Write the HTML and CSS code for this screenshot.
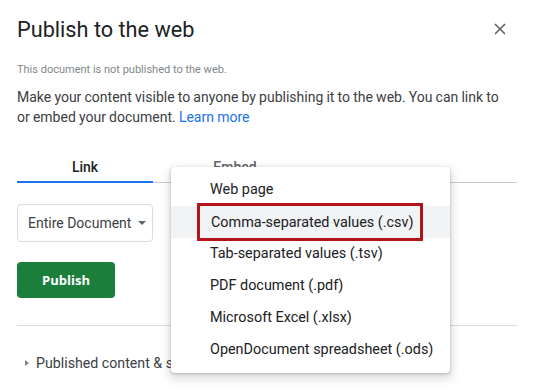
FILE: index.html
```html
<!DOCTYPE html>
<html>
<head>
<meta charset="utf-8">
<link rel="stylesheet" href="styles.css">
</head>
<body>
<div class="dialog">
  <div class="header">
    <h1 class="title">Publish to the web</h1>
    <svg class="close" width="12" height="12" viewBox="0 0 12 12"><path d="M1 1L11 11M11 1L1 11" stroke="#5f6368" stroke-width="1.6"/></svg>
  </div>
  <div class="status">This document is not published to the web.</div>
  <p class="desc">Make your content visible to anyone by publishing it to the web. You can link to or embed your document. <a class="link">Learn more</a></p>
  <div class="tabs">
    <div class="tab active">Link</div>
    <div class="tab embed">Embed</div>
  </div>
  <div class="select">Entire Document <span class="caret"></span></div>
  <button class="publish">Publish</button>
  <hr class="divider">
  <div class="settings"><span class="tri"></span>Published content &amp; settings</div>
</div>
<ul class="menu">
  <li class="item">Web page</li>
  <li class="item hl"><span class="box">Comma-separated values (.csv)</span></li>
  <li class="item">Tab-separated values (.tsv)</li>
  <li class="item">PDF document (.pdf)</li>
  <li class="item">Microsoft Excel (.xlsx)</li>
  <li class="item">OpenDocument spreadsheet (.ods)</li>
</ul>
</body>
</html>
```
FILE: styles.css
```css
html, body { margin: 0; padding: 0; background: #fff; }
body { font-family: Roboto, "Noto Sans", sans-serif; color: #3c4043; width: 535px; height: 389px; overflow: hidden; position: relative; }
.dialog { padding: 0 18px 0 17px; }
.header { display: flex; justify-content: space-between; align-items: center; height: 57px; }
.title { margin: 0; font-family: Roboto, sans-serif; font-weight: 400; font-size: 21.7px; color: #202124; padding-top: 1px; }
.close { margin-right: 11px; margin-top: 0; }
.status { font-size: 11px; color: #80868b; line-height: 14px; margin-top: 6px; }
.desc { margin: 10px 0 0; padding-right: 18px; font-size: 14px; word-spacing: -0.3px; line-height: 20px; color: #3c4043; }
.link { color: #1a73e8; text-decoration: none; }
.tabs { display: flex; margin-top: 24px; border-bottom: 1px solid #c8cacd; height: 31px; }
.tab { width: 136px; text-align: center; font-size: 14px; font-weight: 500; color: #202124; line-height: 26px; padding-top: 3px; }
.tab.active { border-bottom: 2px solid #1a73e8; margin-bottom: -1px; }
.tab.embed { width: 164px; color: #5f6368; }
.select { margin-top: 21px; width: 136px; height: 38px; box-sizing: border-box; border: 1px solid #dadce0; border-radius: 4px; display: flex; align-items: center; font-size: 14px; color: #3c4043; padding-left: 10px; gap: 7px; white-space: nowrap; }
.caret { width: 0; height: 0; border-left: 4px solid transparent; border-right: 4px solid transparent; border-top: 4px solid #5f6368; }
.publish { display: block; margin-top: 20px; width: 98px; height: 36px; border: none; border-radius: 4px; background: #1b7f3b; color: #fff; font-family: "Open Sans", Roboto, sans-serif; font-weight: 700; font-size: 13px; }
.divider { margin: 27px 0 0; border: none; border-top: 1px solid #dadce0; }
.settings { margin-top: 29px; font-size: 14.2px; color: #3c4043; display: flex; align-items: center; gap: 7px; padding-left: 8px; }
.tri { width: 0; height: 0; border-top: 3px solid transparent; border-bottom: 3px solid transparent; border-left: 4px solid #80868b; }
.menu { position: absolute; left: 171px; top: 167px; width: 279px; margin: 0; padding: 7px 0; list-style: none; background: #fff; border-radius: 4px; box-shadow: 0 1px 3px rgba(60,64,67,0.3), 0 4px 8px 3px rgba(60,64,67,0.15); }
.item { height: 32px; line-height: 32px; font-size: 14.4px; color: #202124; padding-left: 39px; }
.item.hl { background: #f1f3f4; padding-left: 26px; line-height: normal; display: flex; align-items: center; }
.box { border: 3px solid #b3141a; padding: 0 7px 0 11px; height: 38px; box-sizing: border-box; display: flex; align-items: center; }
```
